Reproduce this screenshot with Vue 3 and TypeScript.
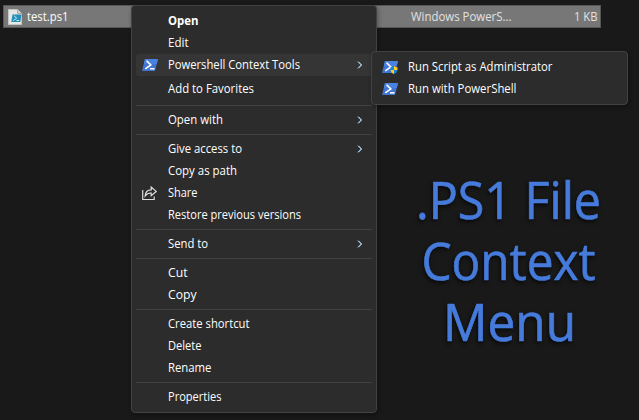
<script setup lang="ts">
interface Item {
  label: string
  width: number
  icon?: 'ps' | 'admin' | 'share'
  arrow?: boolean
  active?: boolean
  bold?: boolean
  spaced?: boolean
}

const groups: Item[][] = [
  [
    { label: 'Open', width: 30.5, bold: true },
    { label: 'Edit', width: 20.5 },
    { label: 'Powershell Context Tools', width: 132, icon: 'ps', arrow: true, active: true },
    { label: 'Add to Favorites', width: 86, spaced: true },
  ],
  [{ label: 'Open with', width: 55, arrow: true }],
  [
    { label: 'Give access to', width: 74, arrow: true },
    { label: 'Copy as path', width: 69 },
    { label: 'Share', width: 29.5, icon: 'share' },
    { label: 'Restore previous versions', width: 133 },
  ],
  [{ label: 'Send to', width: 40, arrow: true }],
  [
    { label: 'Cut', width: 19.5 },
    { label: 'Copy', width: 28.5 },
  ],
  [
    { label: 'Create shortcut', width: 81.5 },
    { label: 'Delete', width: 33.5 },
    { label: 'Rename', width: 43.5 },
  ],
  [{ label: 'Properties', width: 53.5 }],
]

const actions: Item[] = [
  { label: 'Run Script as Administrator', width: 144.5, icon: 'admin' },
  { label: 'Run with PowerShell', width: 108.5, icon: 'ps' },
]

const title = [
  { text: '.PS1 File', width: 185, x: 16 },
  { text: 'Context', width: 174, x: 21.5 },
  { text: 'Menu', width: 133, x: 43 },
]
</script>

<template>
  <main class="desktop">
    <div class="file-row">
      <svg class="file-icon" width="14" height="16" viewBox="0 0 14 16">
        <path d="M.5 .5h9l4 4v11H.5z" fill="#e6e6e2" stroke="#c4c6c4" />
        <path d="M9.5 .5v4h4" fill="#d0d4d4" stroke="#aaa" />
        <path d="M4.5 5.5h9l-1.2 7.5h-9z" fill="#258fb7" />
        <path d="M6 6.7l2.7 2.4-3.4 2.5M8.5 11.5h2.5" fill="none" stroke="#c5ecfa" />
      </svg>
      <svg class="name" width="50" height="22"><text x="0" y="15" textLength="41.5" lengthAdjust="spacingAndGlyphs">test.ps1</text></svg>
      <svg class="kind" width="110" height="22"><text x="0" y="15" textLength="100.5" lengthAdjust="spacingAndGlyphs">Windows PowerS...</text></svg>
      <svg class="size" width="26" height="22"><text x="0" y="15" textLength="23.5" lengthAdjust="spacingAndGlyphs">1 KB</text></svg>
    </div>

    <h1 class="title">
      <svg v-for="line in title" :key="line.text" width="210" height="61">
        <text :x="line.x" y="46" :textLength="line.width" lengthAdjust="spacingAndGlyphs">{{ line.text }}</text>
      </svg>
    </h1>

    <nav class="menu context">
      <section v-for="(group, g) in groups" :key="g" class="group">
        <div v-for="item in group" :key="item.label" class="item" :class="{ active: item.active, bold: item.bold, spaced: item.spaced }">
          <span class="icon">
            <svg v-if="item.icon === 'ps'" width="16" height="12" viewBox="0 0 16 12">
              <path d="M3 0h13l-3 12H0z" fill="#3f74d3" />
              <path d="M3 0h13l-1.2 5H1.8z" fill="#4b82df" />
              <path d="M4.6 1.8l4.2 4.1-5.5 4M8 9.8h4.5" fill="none" stroke="#fff" stroke-width="1.6" />
            </svg>
            <svg v-if="item.icon === 'share'" width="16" height="16" viewBox="0 0 16 16">
              <path d="M.7 5v9.5h11.5v-3M3.2 10.8c.4-4.1 2.6-5.9 6-5.9V2.1l5 4.3-5 4.2V8c-2.6-.1-4.6.8-6 2.8z" fill="none" stroke="#dedede" stroke-width="1.2" />
            </svg>
          </span>
          <svg class="label" width="150" height="22"><text x="0" y="15" :textLength="item.width" lengthAdjust="spacingAndGlyphs">{{ item.label }}</text></svg>
          <svg v-if="item.arrow" class="arrow" width="6" height="8" viewBox="0 0 6 8">
            <path d="M.6 .7L3.9 4 .6 7.3" fill="none" stroke="#3b93dc" />
            <path d="M1.3 .7L4.6 4 1.3 7.3" fill="none" stroke="#f5eee5" />
          </svg>
        </div>
      </section>
    </nav>

    <nav class="menu submenu">
      <div v-for="item in actions" :key="item.label" class="item">
        <span class="icon">
          <svg width="16" height="12" viewBox="0 0 16 12">
            <path d="M3 0h13l-3 12H0z" fill="#3f74d3" />
            <path d="M3 0h13l-1.2 5H1.8z" fill="#4b82df" />
            <path d="M4.6 1.8l4.2 4.1-5.5 4" fill="none" stroke="#fff" stroke-width="1.6" />
            <path v-if="item.icon === 'ps'" d="M8 9.8h4.5" stroke="#fff" stroke-width="1.6" />
            <template v-else>
              <path d="M8.5 6.2q2 0 3.5-1.2v4H8.5z" fill="#168ddd" />
              <path d="M12 5q1.5 1.2 3.5 1.2V9H12z" fill="#ffc928" />
              <path d="M8.5 9H12v4q-3-1-3.5-4z" fill="#ffc928" />
              <path d="M12 9h3.5Q15 12 12 13z" fill="#1687d3" />
            </template>
          </svg>
        </span>
        <svg class="label" width="150" height="22"><text x="0" y="15" :textLength="item.width" lengthAdjust="spacingAndGlyphs">{{ item.label }}</text></svg>
      </div>
    </nav>
  </main>
</template>

<style>
body {
  margin: 0;
  background: #191919;
}
</style>

<style scoped>
.desktop {
  position: relative;
  box-sizing: border-box;
  width: 639px;
  height: 420px;
  padding: 5px 38px 0 3px;
  overflow: hidden;
  background: #191919;
  font-family: 'Open Sans', 'Noto Sans', sans-serif;
  font-size: 12px;
}
svg {
  display: block;
  flex: none;
  overflow: visible;
}
.file-row {
  display: flex;
  align-items: center;
  box-sizing: border-box;
  width: 598px;
  height: 23px;
  padding-left: 4px;
  border: 1px solid #565656;
  background: #777;
}
.file-row text {
  fill: #e2e2e2;
}
.file-row .name {
  margin-left: 5px;
}
.file-row .name text {
  fill: #fff;
}
.file-row .kind {
  margin-left: 334px;
}
.file-row .size {
  margin-left: 53px;
}
.title {
  width: 210px;
  margin: 145px 0 0 397px;
  font-size: 51px;
  font-weight: 400;
}
.title text {
  fill: #467bdb;
  stroke: #467bdb;
  stroke-width: 0.7px;
  filter: drop-shadow(-1px 2px 2px #080808);
}
.menu {
  position: absolute;
  box-sizing: border-box;
  padding: 4px;
  border: 1px solid #424242;
  border-radius: 4px;
  background: #2c2c2c;
  box-shadow: 1px 2px 5px #0005;
}
.context {
  left: 131px;
  top: 5px;
  width: 246px;
  height: 408px;
}
.submenu {
  left: 371px;
  top: 51px;
  width: 257px;
  height: 54px;
}
.group {
  display: flex;
  flex-direction: column;
}
.group + .group {
  margin-top: 3px;
  padding-top: 3px;
  border-top: 1px solid #414141;
}
.item {
  display: flex;
  align-items: center;
  height: 22px;
  padding-left: 6px;
  border-radius: 3px;
}
.item.active {
  background: #353535;
}
.item.spaced {
  margin: 2px 0;
}
.item.bold {
  font-weight: 700;
}
.item text {
  fill: #fff;
}
.icon {
  width: 16px;
  margin-right: 10px;
}
.arrow {
  margin-left: 39px;
}
</style>
